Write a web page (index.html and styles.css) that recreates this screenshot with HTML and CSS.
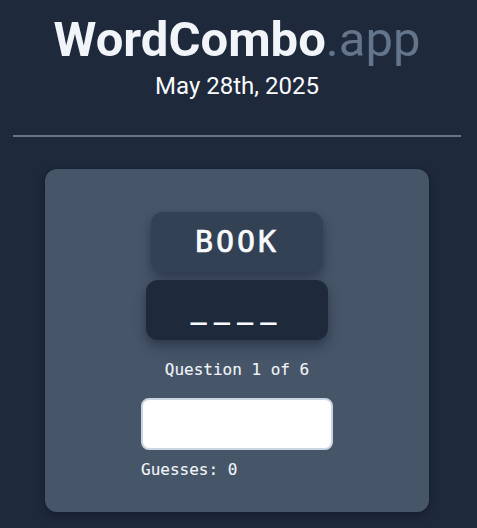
FILE: index.html
```html
<!DOCTYPE html>
<html lang="en">
<head>
<meta charset="utf-8">
<title>WordCombo.app</title>
<link rel="stylesheet" href="styles.css">
</head>
<body>
<div class="page">
  <header class="header">
    <h1 class="title">WordCombo<span class="title-ext">.app</span></h1>
    <p class="date">May 28th, 2025</p>
  </header>
  <hr class="divider">
  <main class="card">
    <div class="tiles">
      <div class="tile tile-word">BOOK</div>
      <div class="tile tile-blank">____</div>
    </div>
    <p class="progress">Question 1 of 6</p>
    <div class="answer">
      <input class="answer-input" type="text" aria-label="Your guess">
      <p class="guesses">Guesses: 0</p>
    </div>
  </main>
</div>
</body>
</html>
```

FILE: styles.css
```css
* { box-sizing: border-box; }

html, body {
  margin: 0;
  padding: 0;
  background: #1e293b;
  height: 100%;
}

body {
  font-family: Roboto, "Liberation Sans", sans-serif;
  color: #f8fafc;
}

.page {
  padding: 16px 16px 0 13px;
}

.header {
  text-align: center;
}

.title {
  margin: 0;
  font-size: 49px;
  line-height: 48px;
  font-weight: 700;
  color: #f1f5f9;
}

.title-ext {
  font-weight: 400;
  color: #64748b;
}

.date {
  margin: 6px 0 0;
  font-size: 24px;
  line-height: 32px;
  color: #f8fafc;
}

.divider {
  margin: 33px 0 0;
  border: 0;
  height: 2px;
  background: #64748b;
}

.card {
  width: 384px;
  margin: 32px auto 0;
  padding: 43px 24px 30px;
  background: #475569;
  border-radius: 12px;
  box-shadow: 0 4px 10px rgba(15, 23, 42, 0.45), 0 0 3px rgba(15, 23, 42, 0.35);
  display: flex;
  flex-direction: column;
  align-items: center;
  font-family: "DejaVu Sans Mono", "Liberation Mono", monospace;
}

.tiles {
  display: flex;
  flex-direction: column;
  align-items: center;
  gap: 8px;
}

.tile {
  padding: 12px 44px;
  font-size: 30px;
  line-height: 36px;
  border-radius: 12px;
  color: #f8fafc;
  box-shadow: 0 8px 14px rgba(15, 23, 42, 0.3), 0 3px 6px rgba(15, 23, 42, 0.2);
  white-space: pre;
}

.tile-word {
  background: #334155;
  letter-spacing: 3px;
  -webkit-text-stroke: 0.7px #f8fafc;
}

.tile-blank {
  background: #1e293b;
  font-size: 27px;
  letter-spacing: 7px;
  font-weight: 700;
}

.progress {
  margin: 18px 0 0;
  font-size: 16px;
  line-height: 24px;
  color: #f1f5f9;
  -webkit-text-stroke: 0.1px #f1f5f9;
}

.answer {
  width: 192px;
  margin-top: 16px;
}

.answer-input {
  display: block;
  width: 192px;
  height: 52px;
  border: 2px solid #cbd5e1;
  border-radius: 8px;
  background: #ffffff;
  font-size: 24px;
  padding: 0 12px;
  outline: none;
}

.guesses {
  margin: 8px 0 0;
  font-size: 16px;
  line-height: 24px;
  color: #f1f5f9;
  text-align: left;
  -webkit-text-stroke: 0.1px #f1f5f9;
}
```
